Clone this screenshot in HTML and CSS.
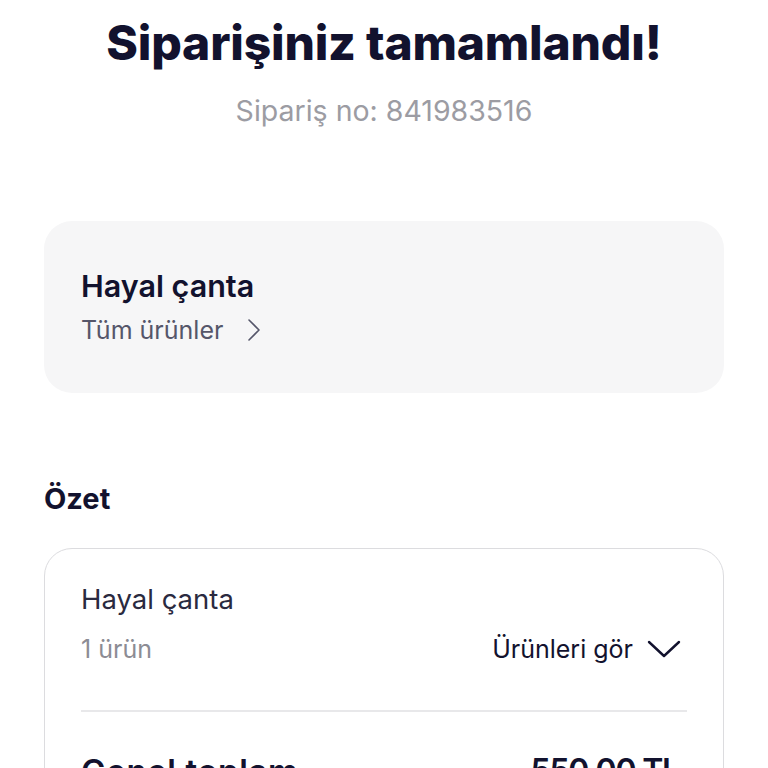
FILE: index.html
```html
<!DOCTYPE html>
<html lang="tr">
<head>
  <meta charset="UTF-8">
  <meta name="viewport" content="width=device-width, initial-scale=1.0">
  <title>Sipariş tamamlandı</title>
  <link rel="stylesheet" href="styles.css">
</head>
<body>

<div class="page">
  <div class="head">
    <h1>Siparişiniz tamamlandı!</h1>
    <p class="orderNo">Sipariş no: 841983516</p>
  </div>

  <div class="shopCard">
    <div class="shopName">Hayal çanta</div>
    <div class="allItems">
      Tüm ürünler
      <svg width="14" height="24" viewBox="0 0 14 24"><path d="M2 2 L12 12 L2 22" fill="none" stroke="#55566a" stroke-width="1.6" stroke-linecap="round" stroke-linejoin="round"/></svg>
    </div>
  </div>

  <h2 class="sectionTitle">Özet</h2>

  <div class="summary">
    <div class="sumShop">Hayal çanta</div>
    <div class="sumRow">
      <span class="count">1 ürün</span>
      <span class="seeItems">
        Ürünleri gör
        <svg width="34" height="20" viewBox="0 0 34 20"><path d="M2 3 L17 17 L32 3" fill="none" stroke="#12122e" stroke-width="2.4" stroke-linecap="round" stroke-linejoin="round"/></svg>
      </span>
    </div>
    <div class="divider"></div>
    <div class="totalRow">
      <span class="label">Genel toplam</span>
      <span class="amount">550,00 TL</span>
    </div>
  </div>
</div>

</body>
</html>
```

FILE: styles.css
```css
* { margin:0; padding:0; box-sizing:border-box; }

body { font-family: Inter, "Noto Sans", sans-serif; color:#12122e; background:#fff; }

.page { padding:0 44px; }

.head { text-align:center; padding-top:10px; }
.head h1 { font-size:48px; font-weight:800; line-height:66px; letter-spacing:-0.2px; }
.orderNo { font-size:28.5px; color:#9c9ca3; line-height:40px; margin-top:15px; }

.shopCard { margin-top:90px; background:#f6f6f7; border-radius:28px; height:172px; padding:46px 37px 0; }
.shopName { font-size:30.5px; font-weight:600; line-height:38px; }
.allItems { font-size:25px; color:#55566a; line-height:34px; margin-top:8px; display:flex; align-items:center; gap:24px; }

.sectionTitle { font-size:29px; font-weight:700; margin-top:88px; line-height:36px; }

.summary { margin-top:31px; border:1.5px solid #dcdcdf; border-radius:28px; padding:33px 42px 0 36px; height:260px; }
.sumShop { font-size:27.5px; line-height:34px; color:#2a2a40; }
.sumRow { display:flex; justify-content:space-between; align-items:center; margin-top:16px; font-size:25px; line-height:34px; }
.count { color:#8c8c94; }
.seeItems { display:flex; align-items:center; gap:14px; color:#12122e; }
.divider { height:2px; background:#e8e8ea; margin-top:44px; margin-right:-6px; }
.totalRow { display:flex; justify-content:space-between; margin-top:39px; padding-right:2px; font-weight:600; line-height:40px; }
.label { font-size:33px; letter-spacing:0.6px; }
.amount { font-size:32px; letter-spacing:-1.2px; }
```
